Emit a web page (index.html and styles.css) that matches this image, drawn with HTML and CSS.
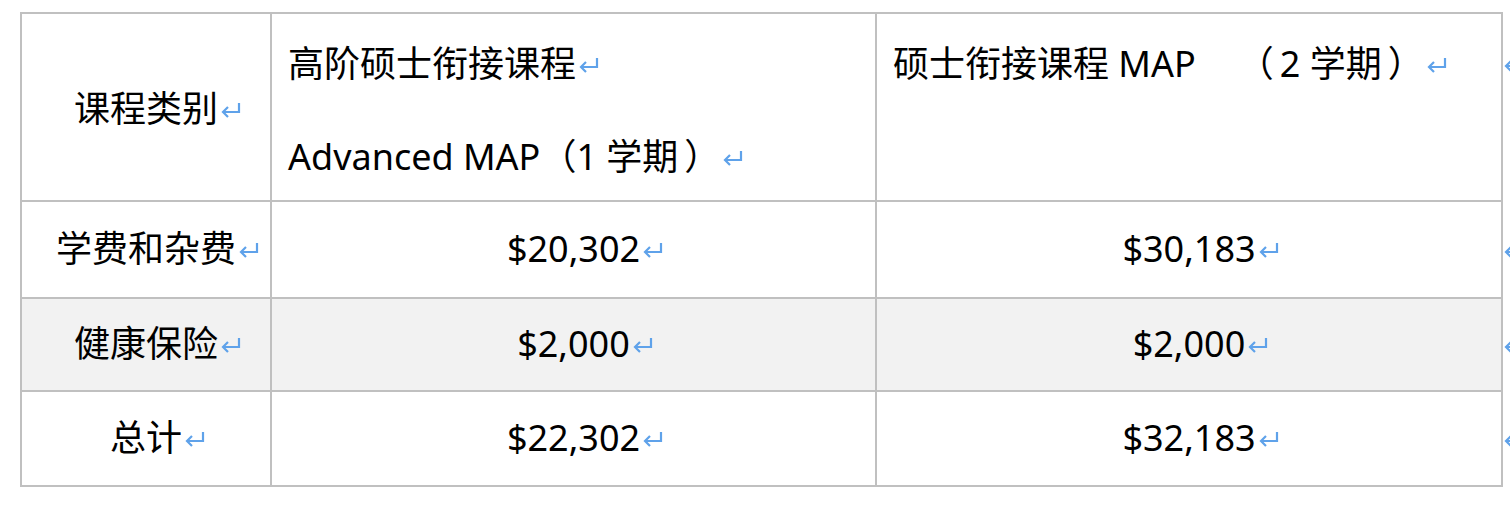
FILE: index.html
```html
<!DOCTYPE html>
<html lang="zh-CN">
<head>
<meta charset="utf-8">
<title>课程费用</title>
<link rel="stylesheet" href="styles.css">
</head>
<body>
<table class="fees">
  <colgroup>
    <col class="c1"><col class="c2"><col class="c3"><col class="c4">
  </colgroup>
  <tr class="r-head">
    <td class="center">课程类别<span class="pm"><svg width="22" height="16" viewBox="0 0 22 16"><path d="M19 1V10H3M8 5L3 10L8 15" fill="none" stroke="#5fa2ea" stroke-width="2.2"/></svg></span></td>
    <td class="top">
      <p class="l1">高阶硕士衔接课程<span class="pm"><svg width="22" height="16" viewBox="0 0 22 16"><path d="M19 1V10H3M8 5L3 10L8 15" fill="none" stroke="#5fa2ea" stroke-width="2.2"/></svg></span></p>
      <p class="l2">Advanced MAP（1 学期<span class="sp"></span>）<span class="pm"><svg width="22" height="16" viewBox="0 0 22 16"><path d="M19 1V10H3M8 5L3 10L8 15" fill="none" stroke="#5fa2ea" stroke-width="2.2"/></svg></span></p>
    </td>
    <td class="top">
      <p class="l1">硕士衔接课程 MAP<span class="gap"></span>（<span class="sp2"></span>2 学期<span class="sp"></span>）<span class="pm"><svg width="22" height="16" viewBox="0 0 22 16"><path d="M19 1V10H3M8 5L3 10L8 15" fill="none" stroke="#5fa2ea" stroke-width="2.2"/></svg></span></p>
    </td>
    <td class="end top"><p class="l1"><span class="pm"><svg width="22" height="16" viewBox="0 0 22 16"><path d="M19 1V10H3M8 5L3 10L8 15" fill="none" stroke="#5fa2ea" stroke-width="2.2"/></svg></span></p></td>
  </tr>
  <tr class="r-fee">
    <td class="center">学费和杂费<span class="pm"><svg width="22" height="16" viewBox="0 0 22 16"><path d="M19 1V10H3M8 5L3 10L8 15" fill="none" stroke="#5fa2ea" stroke-width="2.2"/></svg></span></td>
    <td class="center">$20,302<span class="pm"><svg width="22" height="16" viewBox="0 0 22 16"><path d="M19 1V10H3M8 5L3 10L8 15" fill="none" stroke="#5fa2ea" stroke-width="2.2"/></svg></span></td>
    <td class="center">$30,183<span class="pm"><svg width="22" height="16" viewBox="0 0 22 16"><path d="M19 1V10H3M8 5L3 10L8 15" fill="none" stroke="#5fa2ea" stroke-width="2.2"/></svg></span></td>
    <td class="end"><span class="pm"><svg width="22" height="16" viewBox="0 0 22 16"><path d="M19 1V10H3M8 5L3 10L8 15" fill="none" stroke="#5fa2ea" stroke-width="2.2"/></svg></span></td>
  </tr>
  <tr class="r-ins shaded">
    <td class="center">健康保险<span class="pm"><svg width="22" height="16" viewBox="0 0 22 16"><path d="M19 1V10H3M8 5L3 10L8 15" fill="none" stroke="#5fa2ea" stroke-width="2.2"/></svg></span></td>
    <td class="center">$2,000<span class="pm"><svg width="22" height="16" viewBox="0 0 22 16"><path d="M19 1V10H3M8 5L3 10L8 15" fill="none" stroke="#5fa2ea" stroke-width="2.2"/></svg></span></td>
    <td class="center">$2,000<span class="pm"><svg width="22" height="16" viewBox="0 0 22 16"><path d="M19 1V10H3M8 5L3 10L8 15" fill="none" stroke="#5fa2ea" stroke-width="2.2"/></svg></span></td>
    <td class="end"><span class="pm"><svg width="22" height="16" viewBox="0 0 22 16"><path d="M19 1V10H3M8 5L3 10L8 15" fill="none" stroke="#5fa2ea" stroke-width="2.2"/></svg></span></td>
  </tr>
  <tr class="r-total">
    <td class="center">总计<span class="pm"><svg width="22" height="16" viewBox="0 0 22 16"><path d="M19 1V10H3M8 5L3 10L8 15" fill="none" stroke="#5fa2ea" stroke-width="2.2"/></svg></span></td>
    <td class="center">$22,302<span class="pm"><svg width="22" height="16" viewBox="0 0 22 16"><path d="M19 1V10H3M8 5L3 10L8 15" fill="none" stroke="#5fa2ea" stroke-width="2.2"/></svg></span></td>
    <td class="center">$32,183<span class="pm"><svg width="22" height="16" viewBox="0 0 22 16"><path d="M19 1V10H3M8 5L3 10L8 15" fill="none" stroke="#5fa2ea" stroke-width="2.2"/></svg></span></td>
    <td class="end"><span class="pm"><svg width="22" height="16" viewBox="0 0 22 16"><path d="M19 1V10H3M8 5L3 10L8 15" fill="none" stroke="#5fa2ea" stroke-width="2.2"/></svg></span></td>
  </tr>
</table>
</body>
</html>
```

FILE: styles.css
```css
html, body {
  margin: 0;
  padding: 0;
  background: #ffffff;
  overflow: hidden;
}

body {
  padding: 12px 0 0 20px;
  font-family: "Noto Sans", "Noto Sans CJK SC", sans-serif;
  font-size: 36px;
  color: #000000;
}

.fees {
  border-collapse: collapse;
  table-layout: fixed;
  width: 1520px;
}

.c1 { width: 250px; }
.c2 { width: 605px; }
.c3 { width: 626px; }
.c4 { width: 39px; }

.fees td {
  border: 2px solid #c0c0c0;
  padding: 0;
  line-height: 1.4;
  white-space: nowrap;
}

.fees td.end {
  border: none;
  padding-left: 0;
  text-align: left;
}

.fees td.end .pm svg {
  margin-left: 0;
}

.r-head { height: 188px; }
.r-fee { height: 97px; }
.r-ins { height: 93px; }
.r-total { height: 95px; }

.shaded td:not(.end) {
  background: #f2f2f2;
}

.center {
  text-align: center;
  vertical-align: middle;
}

.r-head .center {
  padding-top: 4px;
}

.top {
  vertical-align: top;
  text-align: left;
  padding-left: 16px !important;
}

.top p {
  margin: 0;
}

.top .l1 {
  padding-top: 25px;
}

.top .l2 {
  margin-top: 43px;
}

.fees td.end.top {
  padding-left: 0 !important;
}

.gap {
  display: inline-block;
  width: 42px;
}

.sp {
  display: inline-block;
  width: 6px;
}

.sp2 {
  display: inline-block;
  width: 6px;
}

.pm {
  display: inline-block;
  width: 0;
  overflow: visible;
  white-space: nowrap;
  vertical-align: 4px;
  line-height: 0;
}

.pm svg {
  display: block;
  margin-left: 2px;
}
```
